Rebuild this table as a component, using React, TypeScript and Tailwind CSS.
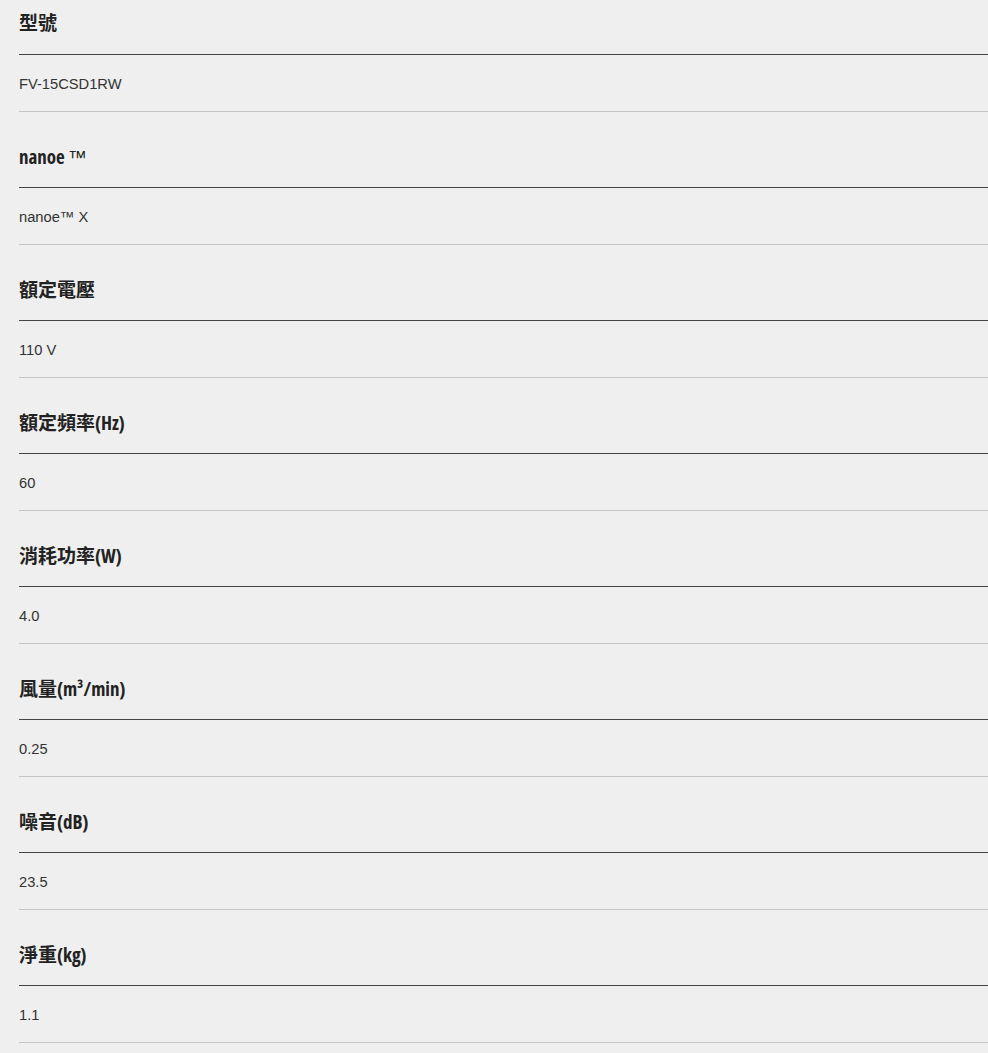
const SPECS: { label: string; value: string }[] = [
  { label: "型號", value: "FV-15CSD1RW" },
  { label: "nanoe™", value: "nanoe™ X" },
  { label: "額定電壓", value: "110 V" },
  { label: "額定頻率(Hz)", value: "60" },
  { label: "消耗功率(W)", value: "4.0" },
  { label: "風量(m³/min)", value: "0.25" },
  { label: "噪音(dB)", value: "23.5" },
  { label: "淨重(kg)", value: "1.1" },
];

// the TM mark falls back to a wider face in the original
function Label({ text }: { text: string }) {
  if (!text.endsWith("™")) return <>{text}</>;
  return (
    <>
      {text.slice(0, -1)}
      <span className="ml-[3px] font-['Liberation_Sans',sans-serif] font-normal font-stretch-normal">™</span>
    </>
  );
}

function SpecRow({ label, value, first }: { label: string; value: string; first: boolean }) {
  return (
    <div className={first ? "" : "mt-[21px]"}>
      <div className={`h-[55px] border-b border-[#444] ${first ? "pt-[10px]" : "pt-[11px]"}`}>
        <h3 className="font-['Open_Sans','Noto_Sans_CJK_TC',sans-serif] text-[19px] font-bold leading-[26px] text-[#222] font-stretch-condensed">
          <Label text={label} />
        </h3>
      </div>
      <div className="flex h-[57px] items-center border-b border-[#c4c4c4] pt-[2px]">
        <span className="font-['Liberation_Sans','Noto_Sans_CJK_TC',sans-serif] text-[14.7px] text-[#333]">
          {value}
        </span>
      </div>
    </div>
  );
}

export default function App() {
  return (
    <div className="min-h-screen bg-[#efefef] pl-[19px]">
      {SPECS.map((s, i) => (
        <SpecRow key={s.label} label={s.label} value={s.value} first={i === 0} />
      ))}
    </div>
  );
}
